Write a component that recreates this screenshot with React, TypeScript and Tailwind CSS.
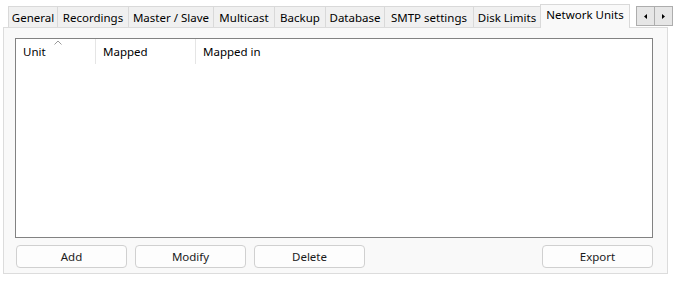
import React from "react";

const tabs = [
  { label: "General", w: 49 },
  { label: "Recordings", w: 71 },
  { label: "Master / Slave", w: 85 },
  { label: "Multicast", w: 61 },
  { label: "Backup", w: 51 },
  { label: "Database", w: 59 },
  { label: "SMTP settings", w: 89 },
  { label: "Disk Limits", w: 67 },
];

const font = { fontFamily: '"Segoe UI", "Noto Sans", "Liberation Sans", sans-serif' };

function Tab({ label, w }: { label: string; w: number }) {
  return (
    <div
      className="h-[21px] shrink-0 border-t border-l border-[#d9d9d9] bg-[#f0f0f0] flex items-center justify-center pt-px text-[11.5px] text-black whitespace-nowrap"
      style={{ width: w }}
    >
      {label}
    </div>
  );
}

function Arrow({ dir }: { dir: "left" | "right" }) {
  return (
    <div className="w-[17px] h-[18px] flex items-center justify-center">
      <svg width="3" height="5" viewBox="0 0 3 5">
        {dir === "left" ? <polygon points="3,0 3,5 0,2.5" fill="#000" /> : <polygon points="0,0 0,5 3,2.5" fill="#000" />}
      </svg>
    </div>
  );
}

function Btn({ children, className = "" }: { children: React.ReactNode; className?: string }) {
  return (
    <button
      className={
        "w-[111px] h-[23px] rounded-[4px] border border-[#d0d0d0] bg-[#fdfdfd] text-[11.5px] text-[#1b1b1b] flex items-center justify-center " +
        className
      }
    >
      {children}
    </button>
  );
}

export default function App() {
  return (
    <div className="w-[675px] h-[282px] bg-white overflow-hidden" style={font}>
      {/* tab strip */}
      <div className="relative z-10 flex items-end h-[27px] pl-[8px]">
        {tabs.map((t) => (
          <Tab key={t.label} {...t} />
        ))}
        <div className="w-[90px] h-[24px] -mb-px shrink-0 border border-b-0 border-[#d9d9d9] bg-[#f9f9f9] flex items-center justify-center pb-[4px] text-[11.5px] text-black whitespace-nowrap">
          Network Units
        </div>
        <div className="self-start mt-[6px] ml-[6px] flex border border-[#adadad] bg-[#e6e6e6]">
          <Arrow dir="left" />
          <div className="w-px bg-[#adadad]" />
          <Arrow dir="right" />
        </div>
      </div>

      {/* panel */}
      <div className="ml-[3px] w-[665px] h-[247px] border border-[#dcdcdc] bg-[#f9f9f9] pl-[11px] pt-[10px]">
        <div className="w-[638px] h-[200px] border border-[#828282] bg-white">
          <div className="flex h-[25px] text-[11.5px] text-black">
            <div className="relative w-[80px] border-r border-[#e5e5e5] pl-[7px] flex items-center">
              Unit
              <svg className="absolute left-[38px] top-[1px]" width="8" height="5" viewBox="0 0 8 5">
                <polyline points="0.5,4.5 4,1 7.5,4.5" fill="none" stroke="#9a9a9a" strokeWidth="1" />
              </svg>
            </div>
            <div className="w-[100px] border-r border-[#e5e5e5] pl-[7px] flex items-center">Mapped</div>
            <div className="pl-[7px] flex items-center">Mapped in</div>
          </div>
        </div>
        <div className="w-[638px] mt-[7px] pl-px flex gap-[8px]">
          <Btn>Add</Btn>
          <Btn>Modify</Btn>
          <Btn>Delete</Btn>
          <Btn className="ml-auto">Export</Btn>
        </div>
      </div>
    </div>
  );
}
